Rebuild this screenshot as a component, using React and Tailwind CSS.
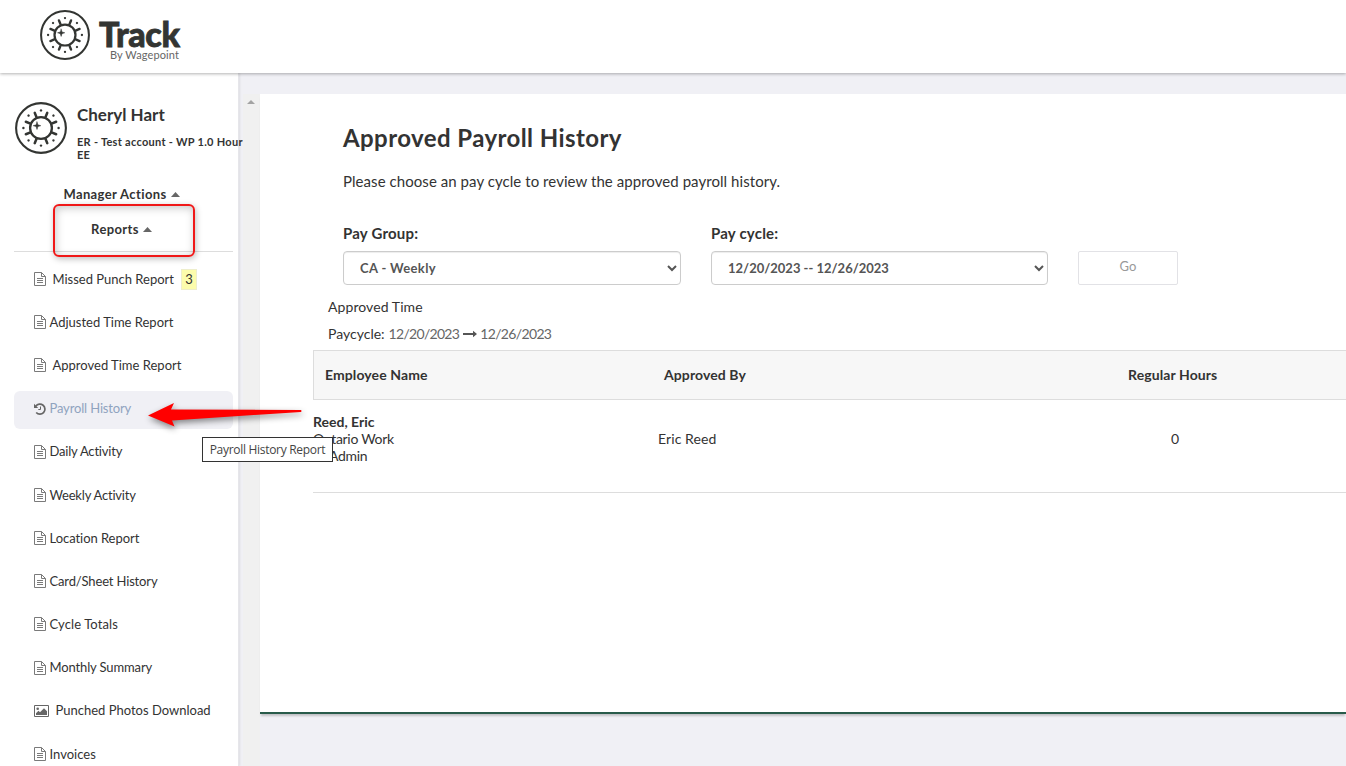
import clsx from 'clsx'

const SunLogo = ({ className }) => (
  <svg viewBox="0 0 52 52" className={className} fill="none" stroke="#333532" strokeLinecap="round">
    <circle cx="26" cy="26" r="24.9" strokeWidth="2.1" />
    <circle cx="26" cy="26" r="10.9" strokeWidth="2.3" />
    {Array.from({ length: 8 }, (_, i) => (
      <g key={i} transform={`rotate(${i * 45} 26 26)`}>
        <circle cx="26" cy="8.400" r="1.200" fill="#333532" stroke="none" />
        <path d="M26 14.600v-5" strokeWidth="2.500" transform="rotate(22.500 26 26)" />
      </g>
    ))}
    <path d="M22 19.900l.9 2.900 2.900.9-2.900.9-.9 2.900-.9-2.900-2.900-.9 2.900-.9z" fill="#333532" strokeWidth=".5" />
  </svg>
)

const FileIcon = () => (
  <svg viewBox="0 0 12 14" className="mb-px w-3 h-3.5 shrink-0" fill="none" stroke="#7a7a7a">
    <path d="M.5 .5h7l4 4v9h-11z" />
    <path d="M7.500 .5v4h4M3 6.500h6M3 8.500h6M3 10.500h6" />
  </svg>
)

const HistoryIcon = () => (
  <svg viewBox="0 0 12 12" className="w-3 h-3 shrink-0" fill="none" stroke="#666">
    <path d="M1.800 3.300A5 5 0 1 1 2.200 9.500" strokeWidth="1.700" />
    <path d="M0 .8v4.200h4.200z" fill="#666" stroke="none" />
    <path d="M6.500 3.500v3H4.300" />
  </svg>
)

const ImageIcon = () => (
  <svg viewBox="0 0 15 12" className="w-[15px] h-3 shrink-0" fill="none" stroke="#666">
    <path d="M.5 .5h14v11H.5z" />
    <circle cx="3.700" cy="3.700" r="1.300" fill="#666" stroke="none" />
    <path d="M2 10V8.300l2.500-2.500 1.500 1.500 4-4 3 3V10z" fill="#666" stroke="none" />
  </svg>
)

const CaretUp = () => (
  <svg viewBox="0 0 9 5" className="w-[9px] h-[5px]" fill="#666">
    <path d="M0 5L4.500 0 9 5z" />
  </svg>
)

const navItems = [
  { label: 'Missed Punch Report', badge: 3, gap: 'ml-[7px]' },
  { label: 'Adjusted Time Report' },
  { label: 'Approved Time Report', gap: 'ml-[7px]' },
  { label: 'Payroll History', icon: HistoryIcon, active: true, spacing: 'tracking-[-0.15px]' },
  { label: 'Daily Activity', spacing: 'tracking-[-0.2px]' },
  { label: 'Weekly Activity', spacing: 'tracking-[-0.2px]' },
  { label: 'Location Report', spacing: 'tracking-[-0.05px]' },
  { label: 'Card/Sheet History', spacing: 'tracking-[-0.15px]' },
  { label: 'Cycle Totals', spacing: 'tracking-[0.1px]' },
  { label: 'Monthly Summary', spacing: 'tracking-[-0.13px]' },
  { label: 'Punched Photos Download', icon: ImageIcon, gap: 'ml-[7px]' },
  { label: 'Invoices' },
]

const Header = () => (
  <header className="relative z-10 flex h-[73px] shrink-0 bg-white pl-10 pt-2.5 shadow-[0_1px_3px_rgba(0,0,0,0.3)]">
    <SunLogo className="size-[50px]" />
    <div className="ml-[9px] mt-1.5 w-[81px]">
      <div className="h-[33px] text-[34px] leading-[35px] font-black tracking-[-0.3px] text-[#333532] [-webkit-text-stroke:0.8px_#333532]">Track</div>
      <div className="pr-px text-right text-[11px] leading-3 tracking-[0.1px] text-[#666] whitespace-nowrap">By Wagepoint</div>
    </div>
  </header>
)

const Sidebar = () => (
  <aside className="w-[243px] shrink-0 overflow-hidden bg-[#f0f0f5]">
    <div className="h-full w-[239px] border-r border-[#e6e6ea] bg-white pl-3.5 pr-[5px] pt-7 shadow-[1px_0_2px_rgba(0,0,0,0.08)]">
      <div className="flex h-[83px]">
        <SunLogo className="ml-px mt-px size-[52px] shrink-0" />
        <div className="ml-2.5 whitespace-nowrap">
          <h2 className="mt-1 text-[17px] leading-5 font-bold">Cheryl Hart</h2>
          <p className="mt-2.5 text-[11px] leading-[13px] font-bold tracking-[0.28px]">
            ER - Test account - WP 1.0 Hour<br />EE
          </p>
        </div>
      </div>
      <div className="border-b border-[#ddd] text-[13px] font-bold tracking-[0.38px]">
        <div className="flex h-[21px] items-center justify-center gap-1 pr-1">Manager Actions <CaretUp /></div>
        <div className="relative flex h-[46px] items-center justify-center gap-1 pr-1 pt-[3px]">
          Reports <CaretUp />
          <div className="absolute -top-px left-[38.5px] h-[53px] w-[142px] rounded-md border-2 border-[#f01818] shadow-[1px_2px_6px_rgba(0,0,0,0.25),inset_1px_2px_8px_rgba(0,0,0,0.22)]" />
        </div>
      </div>
      <nav className="flex flex-col gap-[5.180px] pt-[9.9px]">
        {navItems.map(({ label, icon: Icon = FileIcon, gap = 'ml-1', badge, active, spacing }) => (
          <a
            key={label}
            className={clsx(
              'flex h-[38px] shrink-0 items-center rounded-md pl-[19.5px] pb-[2.800px] text-[13px] whitespace-nowrap',
              active ? 'bg-[#f0f0f5] text-[#8fa3bf]' : 'text-[#333]'
            )}
          >
            <Icon />
            <span className={clsx(gap, spacing)}>{label}</span>
            {badge && (
              <span className="ml-[7px] flex h-[21px] w-4 items-center justify-center border border-[#eeeecc] bg-[#fcfcac]">{badge}</span>
            )}
          </a>
        ))}
      </nav>
    </div>
  </aside>
)

const Field = ({ label, value, className, spacing }) => (
  <label className={clsx('block', className)}>
    <span className="block text-[15px] leading-5 font-bold tracking-[0.2px]">{label}</span>
    <select className={clsx('mt-2 block h-[34px] w-full rounded border border-[#ccc] bg-white pl-3 text-[13px] font-bold text-[#555] shadow-[inset_0_1px_1px_rgba(0,0,0,0.075)]', spacing)}>
      <option>{value}</option>
    </select>
  </label>
)

const columns = 'grid grid-cols-[345px_400px_1fr]'

const PayrollHistory = () => (
  <section className="h-[620px] border-b-2 border-[#285b4a] bg-white pl-[53px] pt-7 shadow-[0_3px_2px_-1px_rgba(0,0,0,0.2)]">
    <div className="pl-[30px]">
      <h1 className="text-[24px] leading-8 font-bold tracking-[0.42px]">Approved Payroll History</h1>
      <p className="mt-[17px] text-[15px] leading-5 tracking-[0.06px]">Please choose an pay cycle to review the approved payroll history.</p>
      <form className="mt-8 flex items-end gap-[30px]">
        <Field label="Pay Group:" value="CA - Weekly" className="w-[338px]" spacing="tracking-[0.35px]" />
        <Field label="Pay cycle:" value="12/20/2023 -- 12/26/2023" className="w-[337px]" />
        <button type="button" className="h-[34px] w-[100px] rounded-[2px] border border-[#e2e2e6] pb-0.5 text-[13px] text-[#999]">Go</button>
      </form>
    </div>
    <div className="pl-[15px] pt-3 text-[14px] leading-[27px]">
      <div className="-mt-1 h-[27px] tracking-[0.08px]">Approved Time</div>
      <div className="flex h-[27px] items-center">
        Paycycle:
        <span className="ml-1 tracking-[-0.7px] text-[#666]">12/20/2023</span>
        <svg viewBox="0 0 14 8" className="ml-1 mr-[3px] h-2 w-3.5" fill="#555">
          <path d="M0 3.100h10V.8L14 4l-4 3.200V4.900H0z" />
        </svg>
        <span className="tracking-[-0.65px] text-[#666]">12/26/2023</span>
      </div>
    </div>
    <div className="mt-[3px] text-[14px]">
      <div className={clsx(columns, 'h-[50px] items-center border-y border-l border-[#ddd] bg-[#f7f7f7] pb-px font-bold tracking-[0.1px]')}>
        <div className="pl-[11px]">Employee Name</div>
        <div className="pl-[5px]">Approved By</div>
        <div className="pl-[69px]">Regular Hours</div>
      </div>
      <div className={clsx(columns, 'h-[93px] border-b border-[#ddd] pt-[13px] leading-[17px]')}>
        <div>
          <div className="font-bold">Reed, Eric</div>
          <div className="tracking-[-0.3px]">Ontario Work</div>
          <div className="pl-4 tracking-[-0.3px]">Admin</div>
        </div>
        <div className="pt-[17px] tracking-[0.1px]">Eric Reed</div>
        <div className="pl-[113px] pt-[17px]">0</div>
      </div>
    </div>
  </section>
)

const App = () => (
  <div className="relative flex h-screen flex-col overflow-hidden bg-[#f0f0f5] font-['Lato',sans-serif] text-[#333]">
    <Header />
    <div className="flex min-h-0 flex-1">
      <Sidebar />
      <div className="mt-[21px] flex w-[17px] shrink-0 justify-center bg-[#f0f0f0] pr-px pt-1.5">
        <svg viewBox="0 0 8 4" className="h-1 w-2" fill="#a3a3a3">
          <path d="M0 4L4 0l4 4z" />
        </svg>
      </div>
      <main className="min-w-0 flex-1 pt-[21px]">
        <PayrollHistory />
      </main>
    </div>

    {/* Pointer and tooltip over the active link */}
    <svg viewBox="0 0 170 40" className="absolute left-[140px] top-[395px] h-10 w-[170px] drop-shadow-[1px_3px_3px_rgba(0,0,0,0.45)]" fill="#f00">
      <path d="M8 20.500L34 8l-3 6.500L161 15q1 1 0 2L32 25.500l2.500 6z" />
    </svg>
    <div className="absolute left-[202px] top-[437px] flex h-[25px] w-[131px] items-center justify-center border border-[#333] bg-white font-['Open_Sans',sans-serif] text-[12px] tracking-[-0.3px] whitespace-nowrap text-[#444]">
      Payroll History Report
    </div>
  </div>
)

export default App
